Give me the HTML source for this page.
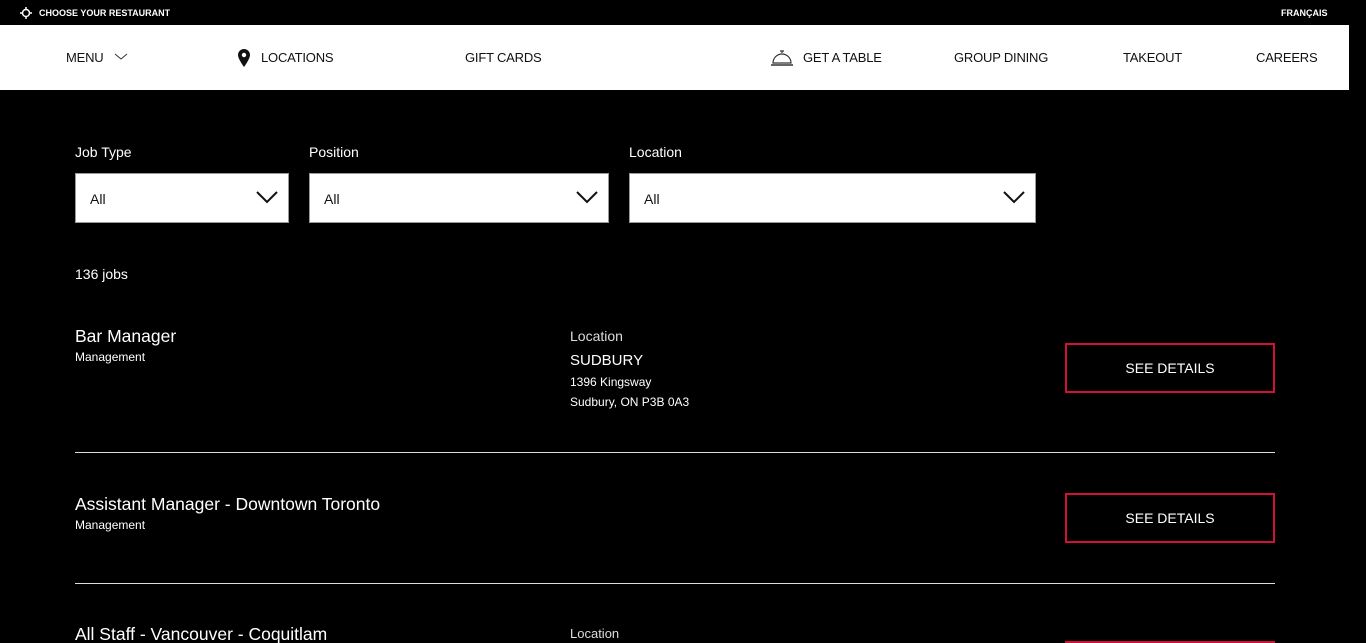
<!DOCTYPE html>
<html style="width:1366px;height:643px;overflow:hidden"><head><style>
*{margin:0;padding:0;box-sizing:border-box}
body{width:1366px;height:643px;overflow:hidden;background:#000;color:#fff;font-family:"Liberation Sans",sans-serif;position:relative}
.a{position:absolute;white-space:nowrap}
.top{font-size:9px;font-weight:bold;top:8px}
.nav{position:absolute;left:0;top:25px;width:1349px;height:65px;background:#fff}
.nl{position:absolute;top:25px;font-size:13px;color:#111;letter-spacing:-0.2px}
.lbl{font-size:14px;top:144px}
.sel{position:absolute;top:173px;height:50px;background:#fff;border:1px solid #999;color:#111;font-size:14px;padding:17px 0 0 14px}
.sel svg{position:absolute;right:10px;top:16px}
.btn{position:absolute;left:1065px;width:210px;height:50px;border:2px solid #d0103a;font-size:14px;text-align:center;line-height:46px}
.hr{position:absolute;left:75px;width:1200px;height:1px;background:#ddd}
.t{font-size:17.5px;line-height:18px}
.s{font-size:12px}
</style></head><body>
<svg class="a" style="left:20px;top:7px" width="12" height="12" viewBox="0 0 12 12"><circle cx="6" cy="6" r="3.5" fill="none" stroke="#fff" stroke-width="1.5"/><path d="M6 0v2.5M6 9.5V12M0 6h2.5M9.5 6H12" stroke="#fff" stroke-width="1.5"/></svg>
<div class="a top" style="left:39px">CHOOSE YOUR RESTAURANT</div>
<div class="a top" style="left:1281px">FRANÇAIS</div>
<div class="nav">
<div class="nl" style="left:66px">MENU</div>
<svg class="a" style="left:114px;top:28px" width="14" height="8" viewBox="0 0 14 8"><path d="M1 1l6 5 6-5" fill="none" stroke="#333" stroke-width="1"/></svg>
<svg class="a" style="left:238px;top:24px" width="12" height="18" viewBox="0 0 12 18"><path d="M6 0C2.7 0 0 2.6 0 6c0 4 6 12 6 12s6-8 6-12C12 2.6 9.3 0 6 0z" fill="#111"/><circle cx="6" cy="6" r="2.2" fill="#fff"/></svg>
<div class="nl" style="left:261px">LOCATIONS</div>
<div class="nl" style="left:465px">GIFT CARDS</div>
<svg class="a" style="left:770px;top:24px" width="24" height="18" viewBox="0 0 24 18"><path d="M10 2h4M12 2v2M3 14a9 9 0 0 1 18 0z" fill="none" stroke="#333" stroke-width="1.2"/><path d="M1 16h22" stroke="#333" stroke-width="1.5"/></svg>
<div class="nl" style="left:803px">GET A TABLE</div>
<div class="nl" style="left:954px">GROUP DINING</div>
<div class="nl" style="left:1123px">TAKEOUT</div>
<div class="nl" style="left:1256px">CAREERS</div>
</div>
<div class="a lbl" style="left:75px">Job Type</div>
<div class="a lbl" style="left:309px">Position</div>
<div class="a lbl" style="left:629px">Location</div>
<div class="sel" style="left:75px;width:214px">All<svg width="22" height="14" viewBox="0 0 22 14"><path d="M1 2l10 10 10-10" fill="none" stroke="#111" stroke-width="2"/></svg></div>
<div class="sel" style="left:309px;width:300px">All<svg width="22" height="14" viewBox="0 0 22 14"><path d="M1 2l10 10 10-10" fill="none" stroke="#111" stroke-width="2"/></svg></div>
<div class="sel" style="left:629px;width:407px">All<svg width="22" height="14" viewBox="0 0 22 14"><path d="M1 2l10 10 10-10" fill="none" stroke="#111" stroke-width="2"/></svg></div>
<div class="a" style="left:75px;top:266px;font-size:14px">136 jobs</div>
<div class="a t" style="left:75px;top:327px">Bar Manager</div>
<div class="a s" style="left:75px;top:350px">Management</div>
<div class="a" style="left:570px;top:328px;font-size:14px;color:#ddd">Location</div>
<div class="a" style="left:570px;top:352px;font-size:15px">SUDBURY</div>
<div class="a s" style="left:570px;top:375px">1396 Kingsway</div>
<div class="a s" style="left:570px;top:395px">Sudbury, ON P3B 0A3</div>
<div class="btn" style="top:343px">SEE DETAILS</div>
<div class="hr" style="top:452px"></div>
<div class="a t" style="left:75px;top:495px">Assistant Manager - Downtown Toronto</div>
<div class="a s" style="left:75px;top:518px">Management</div>
<div class="btn" style="top:493px">SEE DETAILS</div>
<div class="hr" style="top:583px"></div>
<div class="a t" style="left:75px;top:625px">All Staff - Vancouver - Coquitlam</div>
<div class="a" style="left:570px;top:626px;font-size:13px;line-height:15px;color:#ddd">Location</div>
<div class="a" style="left:1065px;top:641px;width:210px;height:2px;background:#d0103a"></div>
</body></html>
